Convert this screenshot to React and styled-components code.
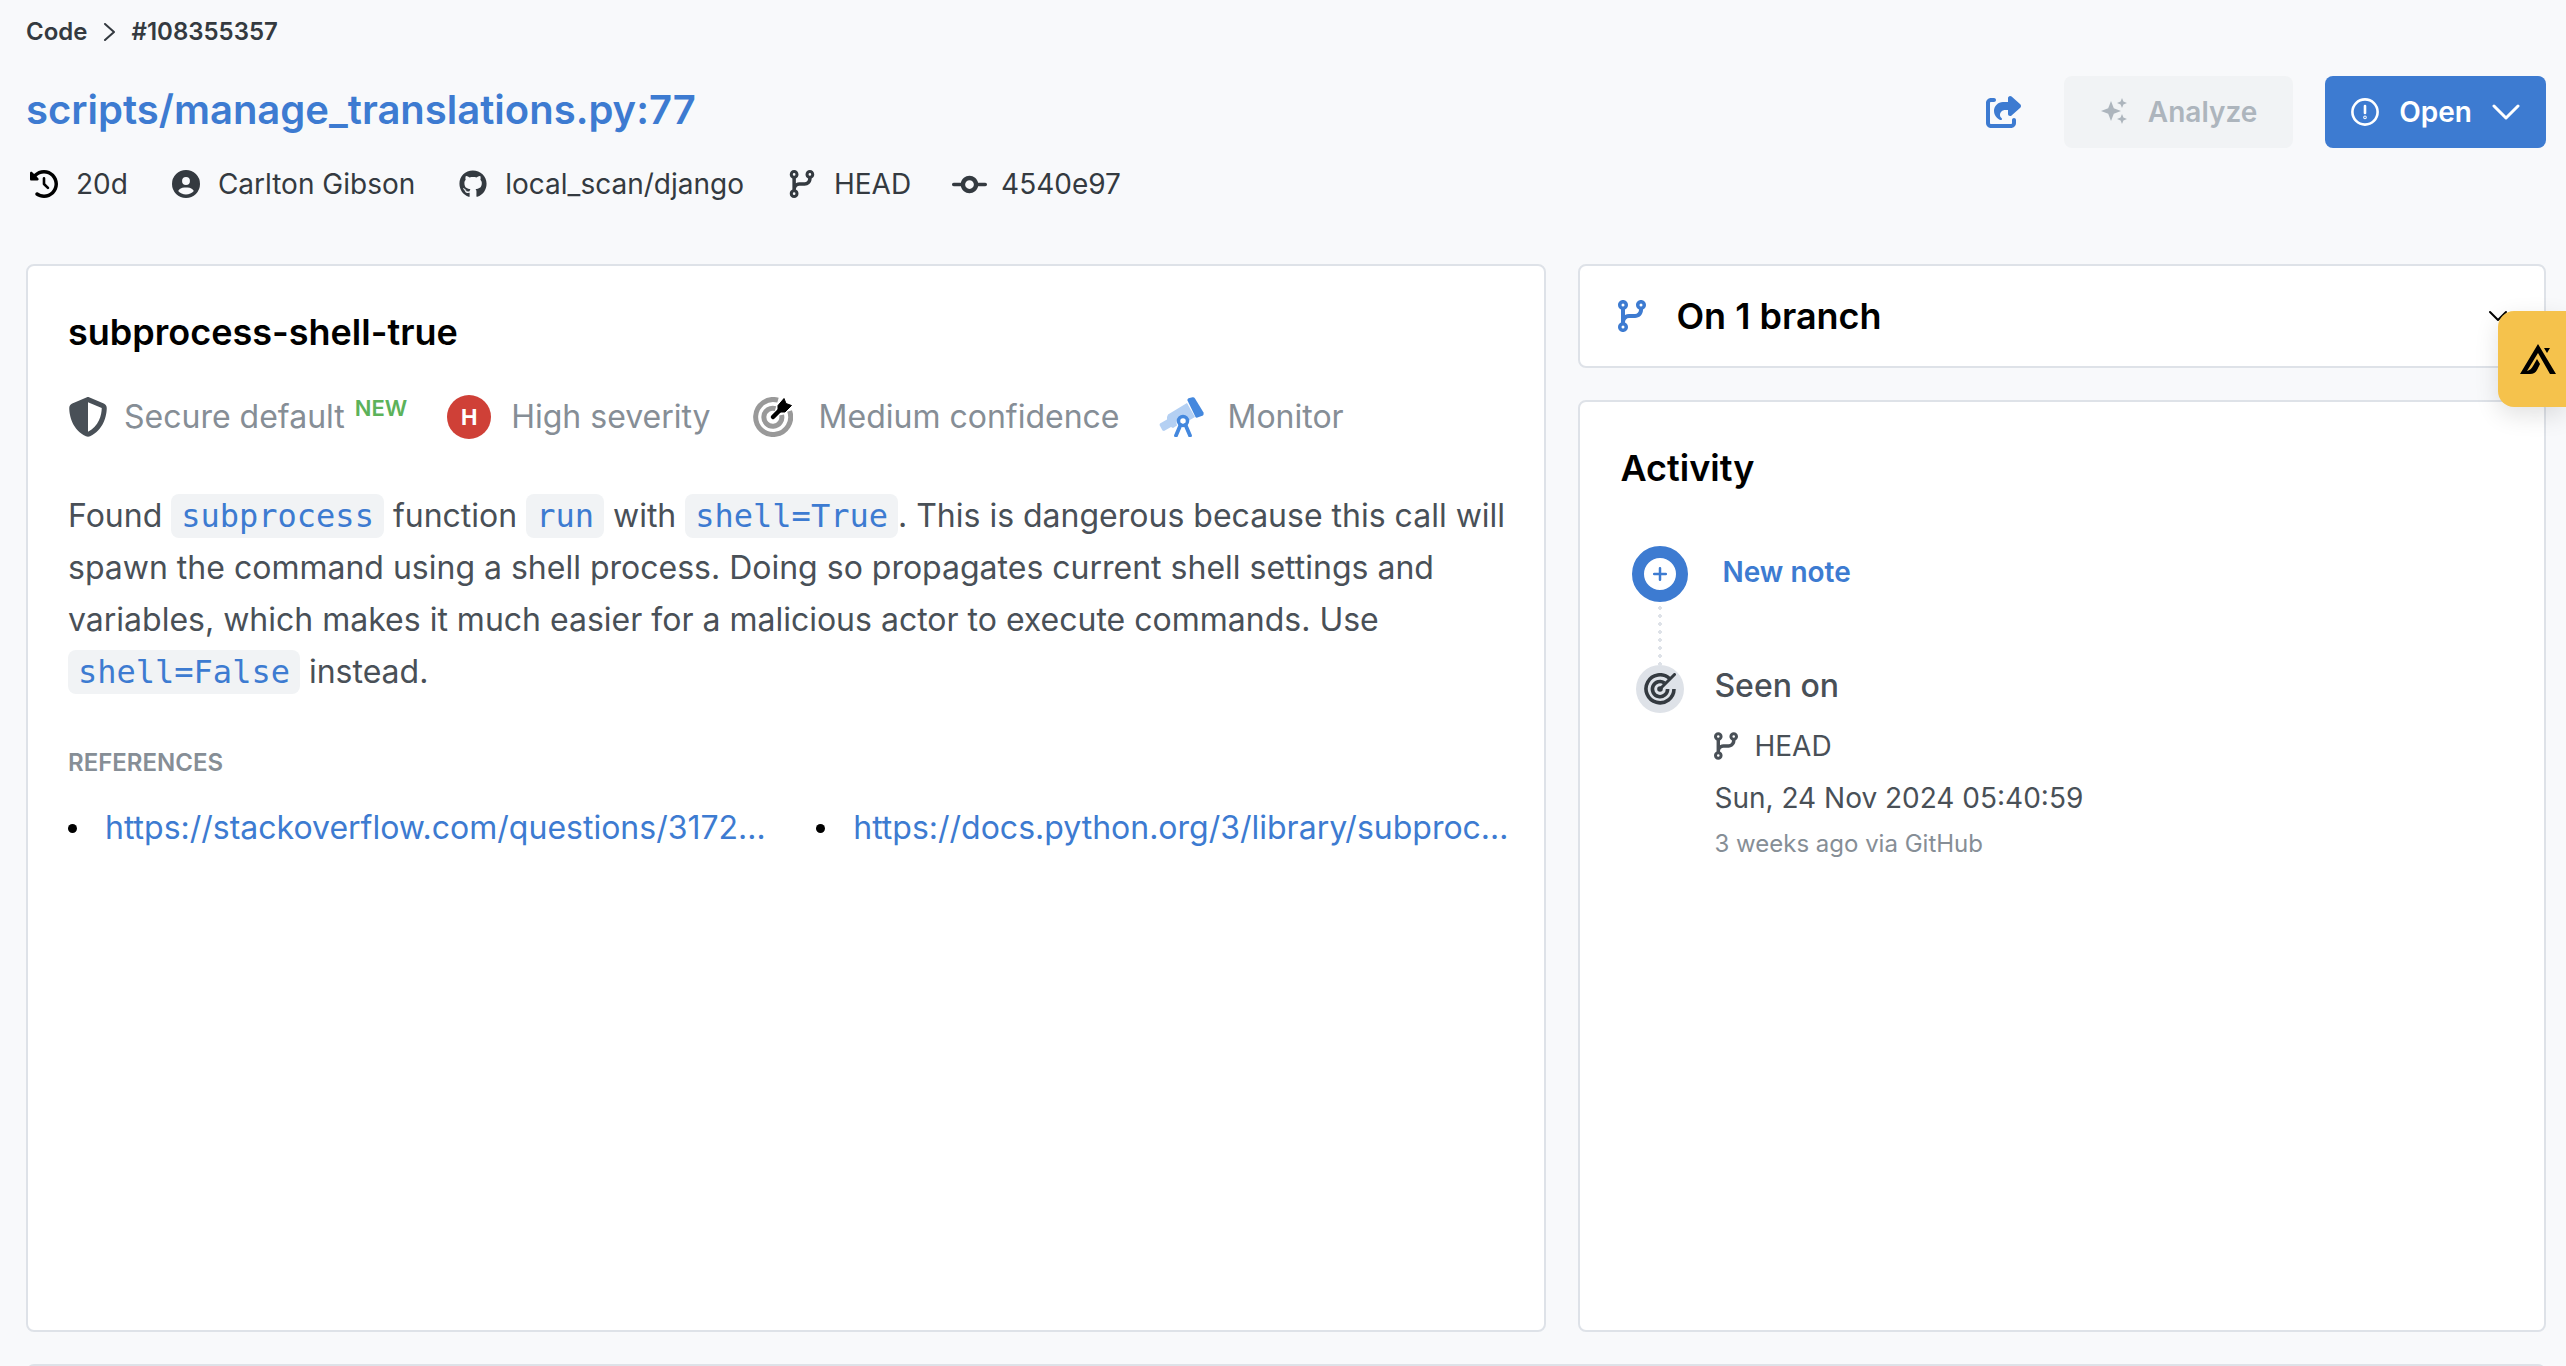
import React from "react";
import styled, { createGlobalStyle } from "styled-components";
import {
  FaClockRotateLeft,
  FaCircleUser,
  FaGithub,
  FaCodeBranch,
  FaCodeCommit,
  FaShareFromSquare,
  FaShieldHalved,
} from "react-icons/fa6";

const color = {
  page: "#f8f9fb",
  border: "#dee2e8",
  soft: "#f1f3f5",
  blue: "#3d7bd1",
  ink: "#343a40",
  text: "#495057",
  muted: "#868e96",
  faint: "#adb5bd",
  red: "#cf4037",
  green: "#5cb25a",
  amber: "#f5c24c",
};

const GlobalStyle = createGlobalStyle`
  * { box-sizing: border-box; }
  body {
    margin: 0;
    background: ${color.page};
    font-family: Inter, "Liberation Sans", sans-serif;
    color: ${color.ink};
  }
  h1, h2, h3, p, ul, ol { margin: 0; padding: 0; }
  button { font: inherit; border: 0; background: none; padding: 0; cursor: pointer; }
  a { color: ${color.blue}; text-decoration: none; }
  svg { display: block; flex: none; }
`;

const Page = styled.div`
  height: 100vh;
  overflow: hidden;
  padding: 14px 20px 0 26px;
`;

const Breadcrumb = styled.nav`
  display: flex;
  align-items: center;
  gap: 16px;
  font-size: 24px;
  line-height: 36px;
  font-weight: 600;
  a { color: ${color.ink}; }
`;

const Header = styled.header`
  display: flex;
  justify-content: space-between;
  align-items: flex-start;
  margin: 26px 0 60px;
`;

const HeaderInfo = styled.div`
  display: flex;
  flex-direction: column;
  gap: 26px;
  padding-top: 6px;
`;

const Title = styled.h1`
  font-size: 40px;
  line-height: 56px;
  font-weight: 600;
`;

const MetaList = styled.ul`
  display: flex;
  gap: 40px;
  list-style: none;
  font-size: 28px;
  line-height: 40px;
`;

const MetaItem = styled.li`
  display: flex;
  align-items: center;
  gap: 14px;
`;

const IconSlot = styled.span`
  display: flex;
  justify-content: center;
  width: ${(p) => p.$width}px;
  color: ${(p) => p.$color || "inherit"};
`;

const Actions = styled.div`
  display: flex;
  align-items: center;
  gap: 32px;
`;

const ShareButton = styled.button`
  display: flex;
  color: ${color.blue};
  margin-right: 10px;
`;

const ActionButton = styled.button`
  display: flex;
  align-items: center;
  gap: 20px;
  height: 72px;
  padding: 0 ${(p) => (p.$primary ? 26 : 36)}px;
  border-radius: 8px;
  font-size: 28px;
  font-weight: 600;
  background: ${(p) => (p.$primary ? color.blue : color.soft)};
  color: ${(p) => (p.$primary ? "#fff" : color.faint)};
`;

const Columns = styled.main`
  display: grid;
  grid-template-columns: 11fr 7fr;
  gap: 32px;
  min-height: calc(100vh - 298px);
`;

const SideColumn = styled.div`
  display: flex;
  flex-direction: column;
  gap: 32px;
`;

const Card = styled.section`
  background: #fff;
  border: 2px solid ${color.border};
  border-radius: 8px;
  padding: 42px 28px 40px 40px;
  flex: ${(p) => (p.$grow ? 1 : "none")};
`;

const NextCard = styled(Card)`
  margin-top: 32px;
`;

const CardTitle = styled.h2`
  font-size: 36px;
  line-height: 48px;
  font-weight: 600;
  color: #000;
`;

const Badges = styled.ul`
  display: flex;
  gap: 40px;
  margin: 39px 0 51px;
  list-style: none;
  font-size: 32px;
  line-height: 44px;
  color: ${color.muted};
`;

const Badge = styled.li`
  display: flex;
  align-items: center;
  gap: ${(p) => p.$gap}px;
`;

const NewTag = styled.sup`
  margin-left: 10px;
  font-size: 22px;
  line-height: 22px;
  font-weight: 600;
  color: ${color.green};
`;

const SeverityDot = styled.span`
  display: flex;
  align-items: center;
  justify-content: center;
  width: 44px;
  height: 44px;
  border-radius: 50%;
  background: ${color.red};
  color: #fff;
  font-size: 22px;
  font-weight: 700;
`;

const Description = styled.p`
  font-size: 32px;
  line-height: 52px;
  color: ${color.text};
`;

const Code = styled.code`
  padding: 3px 10px;
  border-radius: 8px;
  background: ${color.soft};
  color: ${color.blue};
  font-family: "DejaVu Sans Mono", monospace;
  font-size: 32px;
  line-height: 44px;
`;

const SectionLabel = styled.h3`
  margin: 47px 0 23px;
  font-size: 24px;
  line-height: 36px;
  font-weight: 600;
  color: ${color.muted};
`;

const References = styled.ul`
  display: grid;
  grid-template-columns: 1fr 1fr;
  gap: 48px;
  list-style: none;
  font-size: 32px;
  line-height: 48px;
`;

const Reference = styled.li`
  display: flex;
  align-items: center;
  gap: 28px;
  white-space: nowrap;
  &::before {
    content: "";
    width: 9px;
    height: 9px;
    border-radius: 50%;
    background: #000;
  }
`;

const BranchCard = styled(Card)`
  padding: 0;
`;

const BranchToggle = styled.button`
  display: flex;
  align-items: center;
  width: 100%;
  height: 100px;
  padding: 0 36px;
  gap: 28px;
  color: ${color.blue};
`;

const BranchTitle = styled(CardTitle)`
  flex: 1;
  text-align: left;
`;

const Timeline = styled.ol`
  display: grid;
  grid-template-columns: 56px 1fr;
  column-gap: 26px;
  margin: 54px 0 0 12px;
  list-style: none;
`;

const TimelineItem = styled.li`
  display: contents;
`;

const Rail = styled.div`
  display: flex;
  flex-direction: column;
  align-items: center;
`;

const AddButton = styled.button`
  display: flex;
  align-items: center;
  justify-content: center;
  width: 56px;
  height: 56px;
  border: 12px solid ${color.blue};
  border-radius: 50%;
  background: #fff;
  color: ${color.blue};
`;

const SeenDot = styled.span`
  display: flex;
  align-items: center;
  justify-content: center;
  width: 48px;
  height: 48px;
  border-radius: 50%;
  background: ${color.border};
  color: ${color.ink};
`;

const DottedLine = styled.span`
  width: 4px;
  height: 63px;
  background: radial-gradient(circle, ${color.border} 2px, transparent 2px) 0 2px / 4px 8px;
`;

const NoteButton = styled.button`
  align-self: start;
  justify-self: start;
  padding: 0 8px;
  font-size: 28px;
  line-height: 52px;
  font-weight: 600;
  color: ${color.blue};
`;

const SeenBody = styled.div`
  color: ${color.text};
  font-size: 28px;
  line-height: 52px;
`;

const SeenTitle = styled.h3`
  font-size: 32px;
  line-height: 42px;
  font-weight: 500;
  margin-bottom: 13px;
`;

const BranchLine = styled.div`
  display: flex;
  align-items: center;
  gap: 16px;
  svg { width: 24px; }
`;

const Age = styled.p`
  font-size: 24px;
  line-height: 40px;
  color: ${color.muted};
`;

const FloatingTab = styled.button`
  position: fixed;
  top: 311px;
  right: 0;
  display: flex;
  align-items: center;
  justify-content: center;
  width: 68px;
  height: 96px;
  padding: 0 0 0 12px;
  border-radius: 16px 0 0 16px;
  background: ${color.amber};
  color: #000;
  box-shadow: 0 8px 24px rgba(0, 0, 0, 0.12);
`;

const Chevron = ({ width, height, stroke = 2, right = false }) => (
  <svg width={width} height={height} viewBox={`0 0 ${width} ${height}`} fill="none" stroke="currentColor" strokeWidth={stroke} strokeLinecap="round" strokeLinejoin="round">
    {right ? (
      <path d={`M2 1L${width - 1} ${height / 2}L2 ${height - 1}`} />
    ) : (
      <path d={`M2 2L${width / 2} ${height - 2}L${width - 2} 2`} />
    )}
  </svg>
);

const Sparkles = () => (
  <svg width="28" height="28" viewBox="0 0 28 28" fill="currentColor">
    <path d="M11 3l2.800 7.200L21 13l-7.200 2.800L11 23l-2.800-7.200L1 13l7.200-2.800z" />
    <path d="M22 0l1.400 3.600L27 5l-3.600 1.400L22 10l-1.400-3.600L17 5l3.600-1.400z" />
    <path d="M22 16l1.400 3.600L27 21l-3.600 1.400L22 26l-1.400-3.600L17 21l3.600-1.400z" />
  </svg>
);

const AlertCircle = () => (
  <svg width="28" height="28" viewBox="0 0 28 28" fill="none" stroke="currentColor" strokeWidth="2.600" strokeLinecap="round">
    <circle cx="14" cy="14" r="12.600" />
    <path d="M14 8v7" />
    <circle cx="14" cy="19.400" r="0.500" />
  </svg>
);

const TargetDart = () => (
  <svg width="40" height="40" viewBox="0 0 40 40" fill="none">
    <path d="M25 3.200A17.500 17.500 0 1 0 36.600 14" stroke="#999" strokeWidth="5" />
    <path d="M22.500 11.600A9 9 0 1 0 28.600 18" stroke="#999" strokeWidth="5" />
    <path d="M20 20L29 11" stroke="#000" strokeWidth="4.500" strokeLinecap="round" />
    <path d="M25 8.500L31 1.500L33 6.500L38.500 8.500L32 15H27L25 13z" fill="#000" stroke="#000" strokeLinejoin="round" />
  </svg>
);

const Telescope = () => (
  <svg width="45" height="40" viewBox="0 0 45 40" fill="none">
    <path d="M28 6L36 20L30 23.500A6.500 6.500 0 0 0 17.500 26.500L18 28.500L14 31L12 30L5 34L3.500 33.500L0.500 28L1 26.500L8 22.500L8 20L9 17.500z" fill="#b4d0f3" />
    <path d="M28.500 3.500Q28 2 29.500 1.200L33.500 0.300Q35 0 36 1.500L44.500 15.500Q45 17.500 44 18.500L38.500 20.500Q37 21 36.500 20z" fill="#4488de" />
    <circle cx="24" cy="24" r="4.500" stroke="#4488de" strokeWidth="3.500" />
    <path d="M21.500 28L17 38.500M26.500 28L31 38.500" stroke="#4488de" strokeWidth="3.800" strokeLinecap="round" />
  </svg>
);

const Plus = () => (
  <svg width="14" height="14" viewBox="0 0 14 14" fill="none" stroke="currentColor" strokeWidth="2.500" strokeLinecap="round">
    <path d="M7 1.200v11.600M1.200 7h11.600" />
  </svg>
);

const Radar = () => (
  <svg width="32" height="32" viewBox="0 0 32 32" fill="none" stroke="currentColor" strokeWidth="3.600">
    <path d="M25.500 5.500A14 14 0 1 0 30 16" />
    <path d="M20.500 10A7.600 7.600 0 1 0 23.600 16" />
    <circle cx="16" cy="16" r="2.800" fill="currentColor" stroke="none" />
    <path d="M16 16L30.500 1.500" strokeWidth="3" strokeLinecap="round" />
  </svg>
);

const TabLogo = () => (
  <svg width="36" height="30" viewBox="0 0 36 30" fill="currentColor">
    <path d="M18 0L36 30H30L18 9L7 27Q11 26 13 22L17 15L20 20L17 26Q15 30 10 30H0z" />
    <path d="M24 4h6l-3 5z" />
  </svg>
);

const META = [
  { icon: <FaClockRotateLeft size={28} />, label: "20d", tint: "#000" },
  { icon: <FaCircleUser size={28} />, label: "Carlton Gibson" },
  { icon: <FaGithub size={28} />, label: "local_scan/django" },
  { icon: <FaCodeBranch size={28} />, label: "HEAD" },
  { icon: <FaCodeCommit size={35} />, label: "4540e97" },
];

const REFERENCES = [
  { href: "https://stackoverflow.com/questions/3172470", label: "https://stackoverflow.com/questions/3172…" },
  { href: "https://docs.python.org/3/library/subprocess.html", label: "https://docs.python.org/3/library/subproc…" },
];

export default function App() {
  return (
    <>
      <GlobalStyle />
      <Page>
        <Breadcrumb>
          <a href="#code">Code</a>
          <Chevron width={12} height={18} right />
          <span>#108355357</span>
        </Breadcrumb>

        <Header>
          <HeaderInfo>
            <Title>
              <a href="#source">scripts/manage_translations.py:77</a>
            </Title>
            <MetaList>
              {META.map((m) => (
                <MetaItem key={m.label}>
                  <IconSlot $width={36} $color={m.tint}>{m.icon}</IconSlot>
                  {m.label}
                </MetaItem>
              ))}
            </MetaList>
          </HeaderInfo>
          <Actions>
            <ShareButton aria-label="Share">
              <FaShareFromSquare size={36} />
            </ShareButton>
            <ActionButton disabled>
              <Sparkles />
              Analyze
            </ActionButton>
            <ActionButton $primary>
              <AlertCircle />
              Open
              <Chevron width={28} height={16} stroke={3} />
            </ActionButton>
          </Actions>
        </Header>

        <Columns>
          <Card>
            <CardTitle>subprocess-shell-true</CardTitle>
            <Badges>
              <Badge $gap={16}>
                <FaShieldHalved size={40} color={color.text} />
                <span>
                  Secure default
                  <NewTag>NEW</NewTag>
                </span>
              </Badge>
              <Badge $gap={20}>
                <SeverityDot>H</SeverityDot>
                High severity
              </Badge>
              <Badge $gap={24}>
                <IconSlot $width={44}><TargetDart /></IconSlot>
                Medium confidence
              </Badge>
              <Badge $gap={24}>
                <IconSlot $width={44}><Telescope /></IconSlot>
                Monitor
              </Badge>
            </Badges>
            <Description>
              Found <Code>subprocess</Code> function <Code>run</Code> with <Code>shell=True</Code>. This is dangerous
              because this call will spawn the command using a shell process. Doing so propagates current shell
              settings and variables, which makes it much easier for a malicious actor to execute commands. Use{" "}
              <Code>shell=False</Code> instead.
            </Description>
            <SectionLabel>REFERENCES</SectionLabel>
            <References>
              {REFERENCES.map((r) => (
                <Reference key={r.href}>
                  <a href={r.href}>{r.label}</a>
                </Reference>
              ))}
            </References>
          </Card>

          <SideColumn>
            <BranchCard>
              <BranchToggle aria-expanded="false">
                <FaCodeBranch size={32} />
                <BranchTitle as="span">On 1 branch</BranchTitle>
                <IconSlot $width={20} $color="#000">
                  <Chevron width={20} height={12} />
                </IconSlot>
              </BranchToggle>
            </BranchCard>
            <Card $grow>
              <CardTitle>Activity</CardTitle>
              <Timeline>
                <TimelineItem>
                  <Rail>
                    <AddButton aria-label="Add note"><Plus /></AddButton>
                    <DottedLine />
                  </Rail>
                  <NoteButton>New note</NoteButton>
                </TimelineItem>
                <TimelineItem>
                  <Rail>
                    <SeenDot><Radar /></SeenDot>
                  </Rail>
                  <SeenBody>
                    <SeenTitle>Seen on</SeenTitle>
                    <BranchLine>
                      <FaCodeBranch size={28} />
                      HEAD
                    </BranchLine>
                    <p>Sun, 24 Nov 2024 05:40:59</p>
                    <Age>3 weeks ago via GitHub</Age>
                  </SeenBody>
                </TimelineItem>
              </Timeline>
            </Card>
          </SideColumn>
        </Columns>
        <NextCard />
      </Page>
      <FloatingTab aria-label="Open assistant"><TabLogo /></FloatingTab>
    </>
  );
}
